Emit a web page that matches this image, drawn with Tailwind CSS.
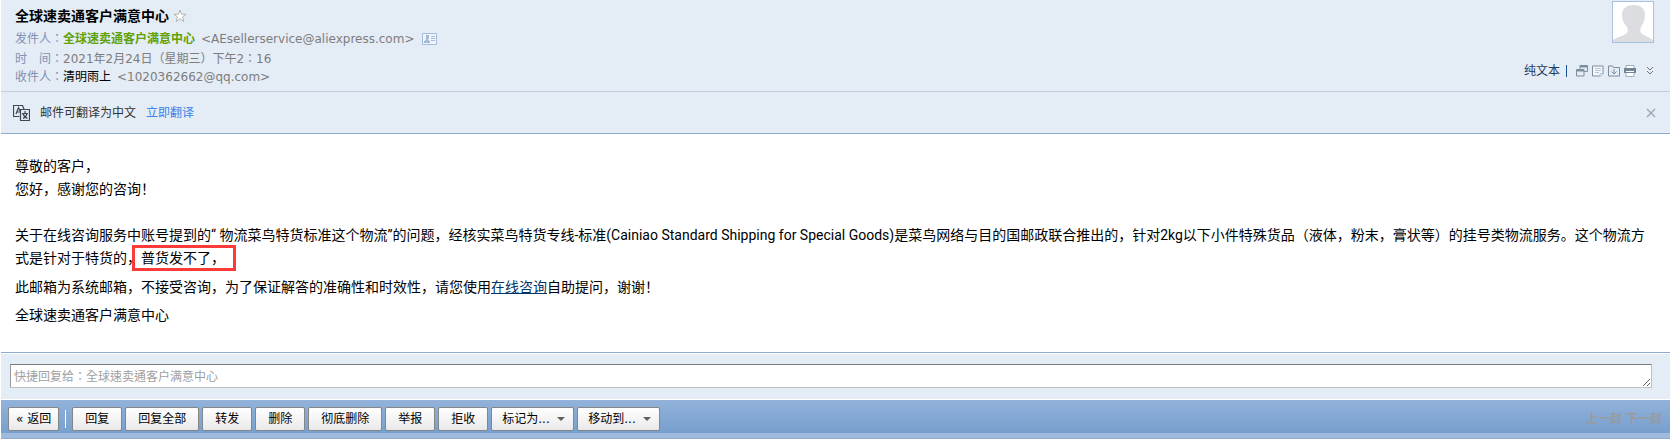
<!DOCTYPE html>
<html lang="zh-CN">
<head>
    <meta charset="UTF-8">
    <meta name="viewport" content="width=device-width, initial-scale=1.0">
    <title>全球速卖通客户满意中心</title>
    <script src="https://cdn.jsdelivr.net/npm/@tailwindcss/browser@4"></script>
</head>
<body class="bg-white font-['DejaVu_Sans','Noto_Sans_CJK_SC',sans-serif] text-xs text-black">
    <div class="ml-px">
        <!-- Mail header -->
        <header class="flex justify-between bg-[#e4ecf6] border-b border-[#c3cddd] pl-[14px] pr-4 pt-px pb-1">
            <div class="pt-1">
                <div class="flex items-center gap-1 h-[22px]">
                    <h1 class="text-sm font-bold">全球速卖通客户满意中心</h1>
                    <button aria-label="星标">
                        <svg class="block w-[14px] h-[14px]" viewBox="0 0 14 14" fill="#fff" stroke="#b4b4b4">
                            <path d="M7 1l1.500 4.200h4.700L9.500 7.900l1.400 4.600L7 9.800l-3.900 2.700 1.400-4.600L.8 5.200h4.700z"></path>
                        </svg>
                    </button>
                </div>
                <dl class="text-[#7d7d7d] whitespace-nowrap">
                    <div class="flex items-center h-6">
                        <dt class="w-12 text-[#8090b2]">发件人<span lang="zh-TW" class="font-['Noto_Sans_CJK_TC',sans-serif] leading-none">：</span></dt>
                        <dd class="flex items-center">
                            <b class="text-[#5fa207]">全球速卖通客户满意中心</b>
                            <span class="ml-[6px]">&lt;AEsellerservice@aliexpress.com&gt;</span>
                            <svg class="w-[15px] h-3 ml-2" viewBox="0 0 15 12" fill="none" stroke="#a3bbd9">
                                <path fill="#f0f5fb" d="M.5.5h14v11H.5z"></path>
                                <path d="M9 3.500h4M9 5.500h4M9 7.500h4"></path>
                                <path fill="#a3bbd9" stroke="none" d="M4 2h3v4H6v1l2 1v2H2V8l2-1z"></path>
                            </svg>
                        </dd>
                    </div>
                    <div class="flex items-center h-4">
                        <dt class="w-12 text-[#8090b2]">时　间<span lang="zh-TW" class="font-['Noto_Sans_CJK_TC',sans-serif] leading-none">：</span></dt>
                        <dd>2021年2月24日（星期三）下午2<span lang="zh-TW" class="font-['Noto_Sans_CJK_TC',sans-serif] leading-none">：</span>16</dd>
                    </div>
                    <div class="flex items-center h-5">
                        <dt class="w-12 text-[#8090b2]">收件人<span lang="zh-TW" class="font-['Noto_Sans_CJK_TC',sans-serif] leading-none">：</span></dt>
                        <dd><span class="text-black">清明雨上</span><span class="ml-[6px]">&lt;1020362662@qq.com&gt;</span></dd>
                    </div>
                </dl>
            </div>
            <div class="flex flex-col items-end justify-between">
                <svg class="w-[42px] h-[42px] border border-[#a9c0e0] bg-white" viewBox="0 0 40 40" fill="#dcdde1">
                    <path d="M0 40v-2c4-3 11-4 14-7 1-1 1-4 0-6-3-3-5-7-5-12C9 6 14 3 21 3s11 4 11 10c0 5-2 9-4 12-1 3-1 5 0 6 3 3 8 4 12 7v2z"></path>
                </svg>
                <div class="flex items-center h-8">
                    <a href="#" class="text-[#1e3c5c]">纯文本</a>
                    <span class="w-px h-3 ml-[6px] mr-[9px] bg-[#1e5494]"></span>
                    <div class="flex items-center gap-1">
                        <button aria-label="新窗口打开">
                            <svg class="block w-3 h-3" viewBox="0 0 12 12" fill="none" stroke="#7c8fa1">
                                <path d="M4 4V.5h7.500v6H8M.5 4.500H8v6.500H.5z"></path>
                                <path stroke-width="2" d="M4 1.500h7.500M.5 5.500H8"></path>
                            </svg>
                        </button>
                        <button aria-label="添加备注">
                            <svg class="block w-3 h-3" viewBox="0 0 12 12" fill="#f4f7fb" stroke="#7c8fa1">
                                <path d="M.5 1h10.500v7.500L8.500 11H.5z"></path>
                                <path stroke="#b9c5d1" d="M3 3.500h6M3 5.500h6M3 7.500h4M8 11V8.500h3"></path>
                            </svg>
                        </button>
                        <button aria-label="保存">
                            <svg class="block w-3 h-3" viewBox="0 0 12 12" fill="none" stroke="#7c8fa1">
                                <path d="M.5 11V1h4l1 1.500h6V11z"></path>
                                <path d="M6 4v5M3.500 6.500L6 9l2.500-2.500"></path>
                            </svg>
                        </button>
                        <button aria-label="打印">
                            <svg class="block w-3 h-3" viewBox="0 0 12 12" fill="none">
                                <path fill="#fff" stroke="#9fadbb" d="M2 3V.5h8V3M2 8v3.500h8V8"></path>
                                <path fill="#71859a" d="M0 3h12v5H0z"></path>
                                <path fill="#fff" d="M2 6h8v1H2z"></path>
                            </svg>
                        </button>
                    </div>
                    <button class="ml-[10px]" aria-label="展开">
                        <svg class="block w-2 h-3" viewBox="0 0 8 12" fill="none" stroke="#777">
                            <path d="M1 2l3 3 3-3M1 6l3 3 3-3"></path>
                        </svg>
                    </button>
                </div>
            </div>
        </header>

        <!-- Translate bar -->
        <div class="flex items-center h-[42px] bg-[#e4ecf6] border-b border-[#8faacf] pl-3 pr-[14px]">
            <svg class="w-[17px] h-[18px] mr-[10px]" viewBox="0 0 17 18" fill="none" stroke="#3f4852" stroke-width="1.200">
                <path d="M6.500 12.500h-6v-11h9L11 5"></path>
                <path d="M3 10l2.500-6.500L7 7M4 8h3"></path>
                <path d="M7.500 5.500h9v11h-9z"></path>
                <path d="M12 7v2M9 9.500h6M10 14.500c2.500-1 3.500-3 4-5M10 9.500c.5 2 2 4 4.500 5"></path>
            </svg>
            <span class="text-[#333]">邮件可翻译为中文</span>
            <a href="#" class="ml-[10px] text-[#3d83e6]">立即翻译</a>
            <button class="ml-auto" aria-label="关闭">
                <svg class="block w-[10px] h-[10px]" viewBox="0 0 10 10" fill="none" stroke="#9fa8b3" stroke-width="1.500">
                    <path d="M1 1l8 8M9 1l-8 8"></path>
                </svg>
            </button>
        </div>

        <!-- Mail body -->
        <main class="px-[14px] pt-[21px] pb-[23px] text-sm font-['Roboto','Noto_Sans_CJK_SC',sans-serif]">
            <div class="leading-[23px]">
                <p>尊敬的客户，</p>
                <p>您好，感谢您的咨询！</p>
                <br>
                <p>关于在线咨询服务中账号提到的“ 物流菜鸟特货标准这个物流”的问题，经核实菜鸟特货专线-标准(Cainiao Standard Shipping for Special Goods)是菜鸟网络与目的国邮政联合推出的，针对2kg以下小件特殊货品（液体，粉末，膏状等）的挂号类物流服务。这个物流方式是针对于特货的，<span class="relative">普货发不了，<span class="absolute -left-[9px] -right-[11px] -inset-y-[5px] border-3 border-[#fb3a3a]"></span></span></p>
            </div>
            <p class="pt-[3px] leading-7">此邮箱为系统邮箱，不接受咨询，为了保证解答的准确性和时效性，请您使用<a href="#" class="text-[#003366] underline">在线咨询</a>自助提问，谢谢！</p>
            <p class="leading-7">全球速卖通客户满意中心</p>
        </main>

        <!-- Quick reply -->
        <div class="border-t border-[#8faacf] pt-px">
            <div class="bg-[#e4ecf6] pl-[9px] pr-[18px] pt-[10px] pb-[11px]">
                <textarea lang="zh-TW" aria-label="快捷回复" rows="1" placeholder="快捷回复给：全球速卖通客户满意中心" class="block w-full h-6 px-[3px] py-[2px] font-['Noto_Sans_CJK_TC',sans-serif] leading-[18px] bg-white border border-[#c0c0c0] border-t-[#7b7b7b] border-l-[#9a9a9a] placeholder:text-[#a0a0a0] resize-y overflow-hidden"></textarea>
            </div>
        </div>

        <!-- Toolbar -->
        <div class="flex items-center gap-[3px] mt-px pt-[7px] pb-[2px] pl-[7px] pr-2 bg-linear-to-b from-[#92b2da] to-[#779fce] border-b-[5px] border-[#a0bade]">
            <button class="h-6 px-[7px] border border-[#868686] rounded-xs bg-linear-to-b from-white to-[#e9e9e9]">« 返回</button>
            <span class="w-px h-[18px] mx-[3px] bg-white"></span>
            <button class="h-6 px-3 border border-[#868686] rounded-xs bg-linear-to-b from-white to-[#e9e9e9]">回复</button>
            <button class="h-6 px-3 border border-[#868686] rounded-xs bg-linear-to-b from-white to-[#e9e9e9]">回复全部</button>
            <button class="h-6 px-3 border border-[#868686] rounded-xs bg-linear-to-b from-white to-[#e9e9e9]">转发</button>
            <button class="h-6 px-3 border border-[#868686] rounded-xs bg-linear-to-b from-white to-[#e9e9e9]">删除</button>
            <button class="h-6 px-3 border border-[#868686] rounded-xs bg-linear-to-b from-white to-[#e9e9e9]">彻底删除</button>
            <button class="h-6 px-3 border border-[#868686] rounded-xs bg-linear-to-b from-white to-[#e9e9e9]">举报</button>
            <button class="h-6 px-3 border border-[#868686] rounded-xs bg-linear-to-b from-white to-[#e9e9e9]">拒收</button>
            <button class="flex items-center justify-between w-[83px] h-6 pl-[10px] pr-2 border border-[#868686] rounded-xs bg-linear-to-b from-white to-[#e9e9e9]">标记为...
                <svg class="w-2 h-1" viewBox="0 0 8 4" fill="#606060"><path d="M0 0h8L4 4z"></path></svg>
            </button>
            <button class="flex items-center justify-between w-[83px] h-6 pl-[10px] pr-2 border border-[#868686] rounded-xs bg-linear-to-b from-white to-[#e9e9e9]">移动到...
                <svg class="w-2 h-1" viewBox="0 0 8 4" fill="#606060"><path d="M0 0h8L4 4z"></path></svg>
            </button>
            <div class="flex gap-1 ml-auto font-bold text-[#9a9a9a]">
                <span>上一封</span>
                <span>下一封</span>
            </div>
        </div>
        <div class="h-px bg-[#8faacf]"></div>
    </div>
</body>
</html>
